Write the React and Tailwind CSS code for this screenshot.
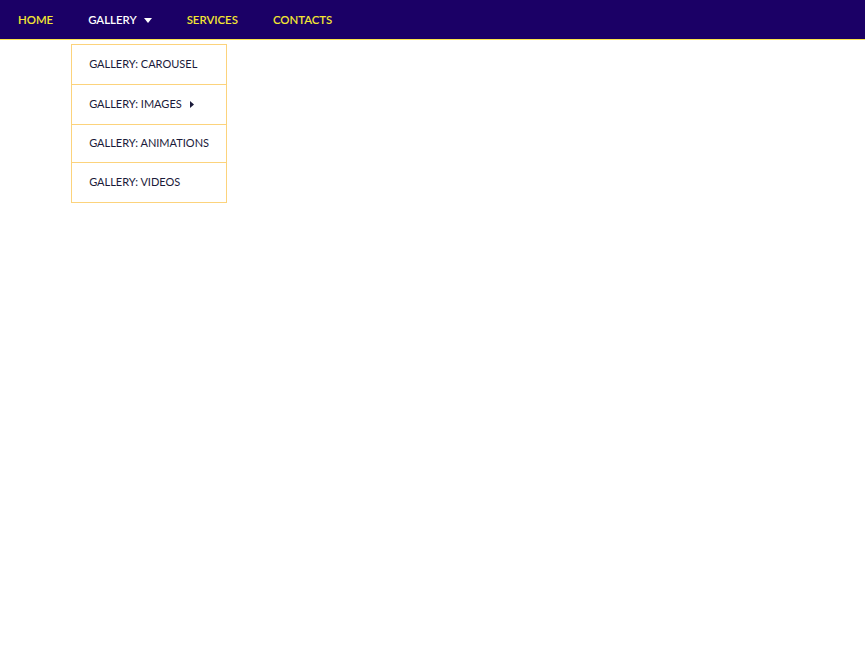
import React from "react";

export default function App() {
  const items = [
    { t: "GALLERY: CAROUSEL", h: "h-[39px]" },
    { t: "GALLERY: IMAGES", h: "h-[40px]" },
    { t: "GALLERY: ANIMATIONS", h: "h-[38px]" },
    { t: "GALLERY: VIDEOS", h: "h-[40px]" },
  ];
  return (
    <div className="min-h-[655px] bg-white" style={{ fontFamily: "Lato, 'Open Sans', sans-serif" }}>
      <nav className="relative h-[40px] bg-[#1b0066] border-b border-[#fbe54a] flex items-center text-[11.4px] font-semibold">
        <a className="ml-[18px] text-[#f3e632]">HOME</a>
        <div className="relative h-full ml-[35px] flex items-center text-white">
          <span>GALLERY</span>
          <svg width="8" height="5" viewBox="0 0 8 5" className="ml-[7px] mt-[1px]"><path d="M0 0H8L4 5Z" fill="#fff" /></svg>
          <div className="absolute left-[-17px] top-[44px] w-[156px] bg-white border border-[#fcd37c] font-normal text-[11px] text-[#1a1a3a]">
            {items.map(({ t, h }, i) => (
              <div key={t} className={`${h} flex items-center pl-[17px] ${i > 0 ? "border-t border-[#fcd37c]" : ""}`}>
                <span>{t}</span>
                {t === "GALLERY: IMAGES" && (
                  <svg width="4" height="7" viewBox="0 0 4 7" className="ml-[8px]"><path d="M0 0L4 3.5L0 7Z" fill="#1a1a3a" /></svg>
                )}
              </div>
            ))}
          </div>
        </div>
        <a className="ml-[35px] text-[#f3e632]">SERVICES</a>
        <a className="ml-[35px] text-[#f3e632]">CONTACTS</a>
      </nav>
    </div>
  );
}
